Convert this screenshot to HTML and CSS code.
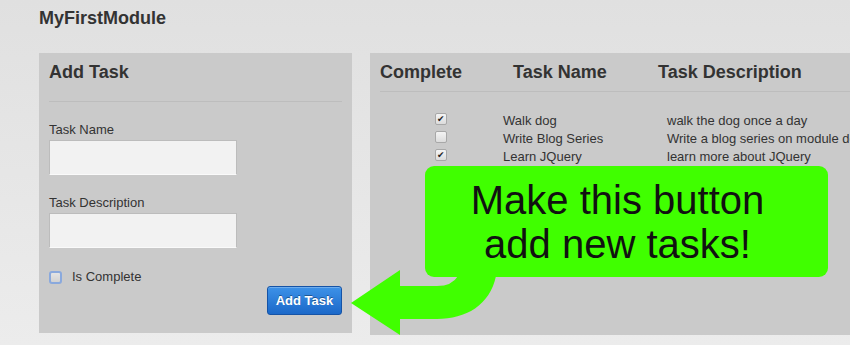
FILE: index.html
```html
<!DOCTYPE html>
<html lang="en">
<head>
    <meta charset="UTF-8">
    <meta name="viewport" content="width=device-width, initial-scale=1.0">
    <title>MyFirstModule</title>
    <link rel="stylesheet" href="styles.css">
</head>
<body>

<div class="page">
    <h1 class="module-title">MyFirstModule</h1>

    <div class="panels">
        <div class="panel add-panel">
            <h2>Add Task</h2>
            <div class="divider"></div>

            <label class="field-label">Task Name</label>
            <div class="text-input"></div>

            <label class="field-label">Task Description</label>
            <div class="text-input"></div>

            <div class="complete-row">
                <span class="form-check"></span>
                <span>Is Complete</span>
            </div>

            <div class="button-row">
                <button class="add-btn">Add Task</button>
            </div>
        </div>

        <div class="panel list-panel">
            <div class="list-head">
                <div class="col-complete">Complete</div>
                <div class="col-name">Task Name</div>
                <div class="col-desc">Task Description</div>
            </div>
            <div class="divider"></div>

            <div class="task-rows">
                <div class="task-row">
                    <div class="cell-check"><span class="box checked"></span></div>
                    <div class="cell-name">Walk dog</div>
                    <div class="cell-desc">walk the dog once a day</div>
                </div>
                <div class="task-row">
                    <div class="cell-check"><span class="box"></span></div>
                    <div class="cell-name">Write Blog Series</div>
                    <div class="cell-desc">Write a blog series on module development</div>
                </div>
                <div class="task-row">
                    <div class="cell-check"><span class="box checked"></span></div>
                    <div class="cell-name">Learn JQuery</div>
                    <div class="cell-desc">learn more about JQuery</div>
                </div>
            </div>
        </div>
    </div>
</div>

<!-- annotation drawn over the page -->
<svg class="arrow" width="850" height="345" viewBox="0 0 850 345">
    <path d="M351 303 L400 270 L400 286 L437 286 Q452 286 458 276 L496 276 C490 305 466 319 437 319 L400 319 L400 335 Z" fill="#40ff00"/>
</svg>
<div class="callout">Make this button<br>add new tasks!</div>

</body>
</html>
```

FILE: styles.css
```css
body {
    margin: 0;
    width: 850px;
    height: 345px;
    overflow: hidden;
    font-family: "Liberation Sans", Arial, sans-serif;
    color: #333;
    background: linear-gradient(#e0e0e0, #ececec);
    position: relative;
}

.page {
    padding-left: 39px;
}

.module-title {
    margin: 0 0 25px 0;
    padding-top: 8px;
    font-size: 18px;
    line-height: 20px;
    font-weight: bold;
    color: #333;
}

.panels {
    display: flex;
    gap: 18px;
    align-items: flex-start;
}

.panel {
    flex-shrink: 0;
    background-color: #cacaca;
    box-sizing: border-box;
    padding: 8px 10px;
}

.panel h2,
.list-head {
    margin: 0;
    font-size: 18px;
    line-height: 22px;
    font-weight: bold;
    color: #333;
}

.divider {
    border-top: 1px solid #bdbdbd;
}

/* add task form */
.add-panel {
    width: 313px;
    height: 280px;
}

.add-panel .divider {
    margin-top: 18px;
}

.field-label {
    display: block;
    margin-top: 20px;
    font-size: 13px;
    line-height: 16px;
}

.text-input {
    margin-top: 2px;
    width: 188px;
    height: 35px;
    box-sizing: border-box;
    background-color: #f2f2f2;
    border: 1px solid #bcbcbc;
    border-bottom-color: #fafafa;
}

.complete-row {
    margin-top: 21px;
    display: flex;
    align-items: center;
    gap: 10px;
    font-size: 13px;
    line-height: 16px;
}

.form-check {
    width: 13px;
    height: 13px;
    box-sizing: border-box;
    border: 2px solid #8aa9dd;
    border-radius: 3px;
    background: linear-gradient(#e4e4e4, #d2d2d2);
}

.button-row {
    display: flex;
    justify-content: flex-end;
    margin-top: 1px;
}

.add-btn {
    width: 75px;
    height: 29px;
    padding: 0;
    font-family: "Liberation Sans", Arial, sans-serif;
    font-size: 13px;
    font-weight: bold;
    color: #fff;
    text-shadow: 0 -1px 0 rgba(0, 0, 0, 0.35);
    background: linear-gradient(#3d92e8, #1b68c9);
    border: 1px solid #1553a6;
    border-radius: 3px;
    box-shadow: inset 0 1px 0 rgba(255, 255, 255, 0.25);
}

/* task list */
.list-panel {
    width: 520px;
    height: 282px;
}

.list-head {
    display: flex;
}

.list-head > div,
.task-row > div {
    flex-shrink: 0;
}

.col-complete {
    width: 133px;
}

.col-name {
    width: 145px;
}

.col-desc {
    white-space: nowrap;
}

.list-panel .divider {
    margin-top: 8px;
    margin-right: -20px;
}

.task-rows {
    margin-top: 20px;
}

.task-row {
    display: flex;
    font-size: 13px;
    line-height: 18px;
    white-space: nowrap;
}

.cell-check {
    width: 68px;
    padding-left: 55px;
    padding-top: 1px;
}

.cell-name {
    width: 164px;
}

.box {
    display: block;
    width: 12px;
    height: 12px;
    box-sizing: border-box;
    border: 1px solid #a8a8a8;
    border-radius: 2px;
    background: linear-gradient(#f4f4f4, #dcdcdc);
    position: relative;
}

.box.checked::after {
    content: "\2714";
    position: absolute;
    left: 1px;
    top: -3px;
    font-family: "DejaVu Sans", sans-serif;
    font-size: 9px;
    line-height: 16px;
    color: #222;
}

/* annotation */
.arrow {
    position: absolute;
    left: 0;
    top: 0;
}

.callout {
    position: absolute;
    left: 425px;
    top: 166px;
    width: 403px;
    height: 111px;
    box-sizing: border-box;
    padding: 12px 18px 0 0;
    background-color: #40ff00;
    border-radius: 9px;
    text-align: center;
    font-size: 40px;
    line-height: 44px;
    color: #111;
}
```
